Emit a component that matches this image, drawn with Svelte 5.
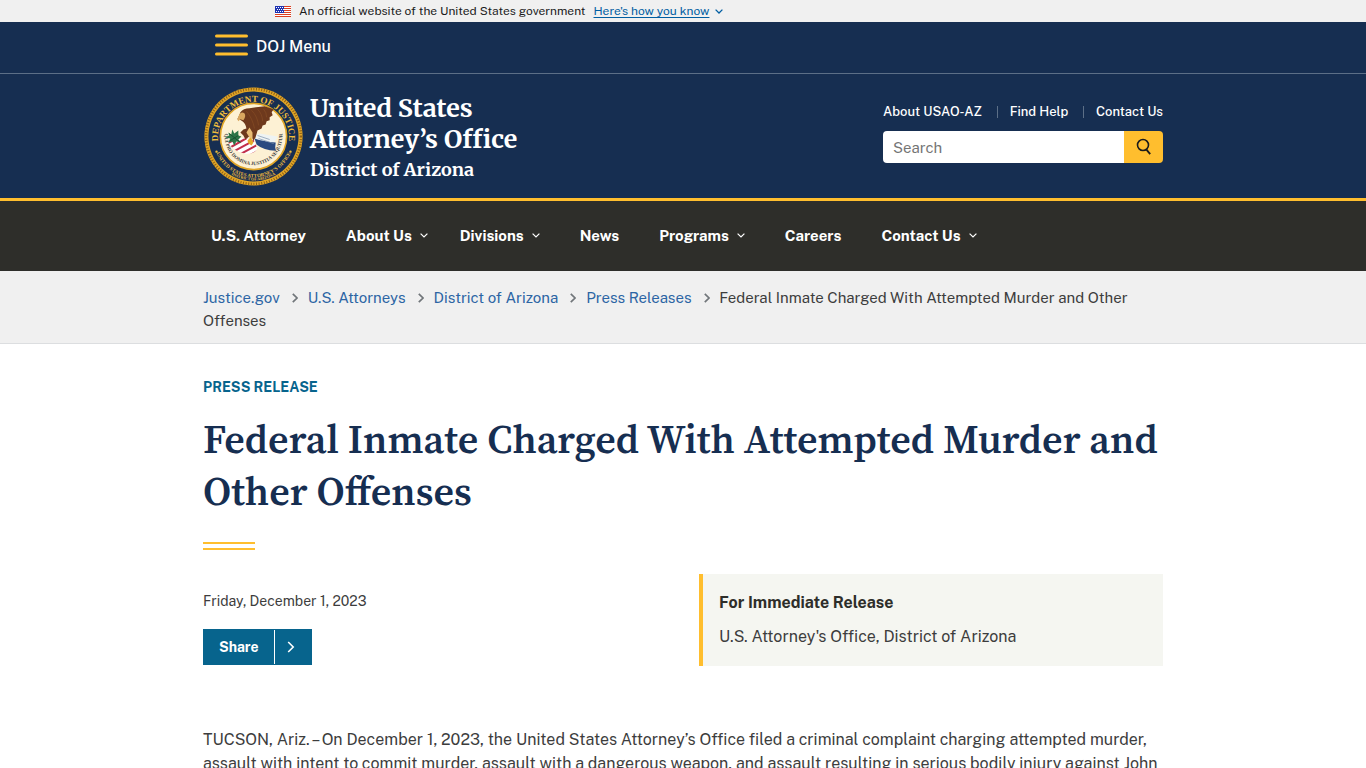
<script lang="ts">
	const topLinks = ['About USAO-AZ', 'Find Help', 'Contact Us'];

	const navItems = [
		{ label: 'U.S. Attorney', menu: false },
		{ label: 'About Us', menu: true },
		{ label: 'Divisions', menu: true },
		{ label: 'News', menu: false },
		{ label: 'Programs', menu: true },
		{ label: 'Careers', menu: false },
		{ label: 'Contact Us', menu: true }
	];

	const crumbs = ['Justice.gov', 'U.S. Attorneys', 'District of Arizona', 'Press Releases'];
	const title = 'Federal Inmate Charged With Attempted Murder and Other Offenses';

	let query = $state('');
</script>

<div class="banner">
	<div class="wrap banner-inner">
		<svg class="flag" viewBox="0 0 16 11" aria-hidden="true">
			<rect width="16" height="11" fill="#fff" />
			<path
				d="M0 .5h16M0 2.5h16M0 4.5h16M0 6.5h16M0 8.5h16M0 10.5h16"
				stroke="#db3e1f"
				stroke-width="1"
			/>
			<rect width="9" height="7" fill="#1e33b1" />
			<path
				d="M1 1.5h8M2 3.5h7M1 5.5h8"
				stroke="#fff"
				stroke-width="1"
				stroke-dasharray="1 1"
			/>
		</svg>
		<span>An official website of the United States government</span>
		<button class="know" type="button">
			<span>Here's how you know</span>
			<svg viewBox="0 0 8 5" width="8" height="5" aria-hidden="true">
				<path d="M.6.6 4 4 7.4.6" fill="none" stroke="currentColor" stroke-width="1.3" />
			</svg>
		</button>
	</div>
</div>

<header>
	<div class="menu-bar">
		<div class="wrap">
			<button class="menu" type="button">
				<svg viewBox="0 0 33 22" width="33" height="22" aria-hidden="true">
					<path
						d="M1.5 2h30M1.5 11h30M1.5 20h30"
						stroke="#ffbe2e"
						stroke-width="3"
						stroke-linecap="round"
					/>
				</svg>
				<span>DOJ Menu</span>
			</button>
		</div>
	</div>

	<div class="wrap masthead">
		<a class="brand" href="#home">
			<svg class="seal" viewBox="0 0 100 100" role="img" aria-label="Department of Justice seal">
				<defs>
					<path id="arc-top" d="M16.6 62A35.2 35.2 0 1 1 83.4 62" />
					<path id="arc-motto" d="M22 44A28.6 28.6 0 1 0 78 44" />
					<path id="arc-office" d="M11 60A40.2 40.2 0 0 0 89 60" />
					<path id="arc-district" d="M20 81.6A43.6 43.6 0 0 0 80 81.6" />
					<clipPath id="shield">
						<path d="M25 56 34 51 50 53 54 62Q50 68 42 67Q30 65 25 56Z" />
					</clipPath>
				</defs>
				<circle cx="50" cy="50" r="48.6" fill="#e0a526" />
				<circle
					cx="50"
					cy="50"
					r="47"
					fill="none"
					stroke="#8f6016"
					stroke-width="2.6"
					stroke-dasharray="1 1.6"
				/>
				<circle cx="50" cy="50" r="44.6" fill="#162e51" />
				<circle cx="50" cy="50" r="32.8" fill="#fdf1d4" stroke="#e0a526" stroke-width="1.6" />
				<text class="ring"><textPath href="#arc-top" startOffset="50%">DEPARTMENT OF JUSTICE</textPath></text>
				<text class="office"><textPath href="#arc-office" startOffset="50%">UNITED STATES ATTORNEY’S OFFICE</textPath></text>
				<text class="district"><textPath href="#arc-district" startOffset="50%">DISTRICT OF ARIZONA</textPath></text>
				<text class="motto"><textPath href="#arc-motto" startOffset="50%">QUI PRO DOMINA JUSTITIA SEQUITUR</textPath></text>
				<circle cx="13.4" cy="65" r="1.2" fill="#f0bd3c" />
				<circle cx="86.6" cy="65" r="1.2" fill="#f0bd3c" />
				<g clip-path="url(#shield)">
					<rect x="20" y="50" width="40" height="20" fill="#fff" />
					<path
						d="M22 58 37 50M25 62 46 50M30 65 54 52M36 68 58 56M44 70 58 62"
						stroke="#c22f4b"
						stroke-width="2"
					/>
				</g>
				<path d="M49 50 56 47 74 50 71 55 73 59 64 58 54 56Z" fill="#eef3f3" />
				<path d="M51 52Q60 55 72 56Q71 61 72 64Q60 64 53 58Z" fill="#2a4a80" />
				<path d="M54 49 66 53M55 52 70 57" stroke="#7f93ad" stroke-width=".7" />
				<path
					d="M25 46 28 48 29 43 31 47 35 44 35 49 38 50 35 53 38 56 33 55 31 59 29 55 25 56 27 52 22 51 26 49Z"
					fill="#2c7547"
				/>
				<path d="M26 47 37 56M27 54 35 49" stroke="#17492e" stroke-width=".8" />
				<path
					d="M34 33Q36 29 37 26Q40 22 46 22L61 20 70 23 68 26 69 29 66 31 66 34 63 35 62 38 59 39 58 42 54 44 52 51 50 54 47 49 42 53 40 49 37 46 40 43 43 42Q42 37 39 35L36 33Z"
					fill="#6e391d"
				/>
				<path
					d="M43 25Q49 32 51 42M48 24Q54 30 55 39M54 23Q59 28 59 35M60 23Q63 26 63 31"
					fill="none"
					stroke="#824a24"
					stroke-width=".8"
				/>
				<path d="M34 33 36 28Q38 25 41 27Q43 30 40 34L37 33 35 35Z" fill="#d9a760" />
				<path d="M46 41 49 46 49 56 46 51 43 46Z" fill="#e8bd75" />
				<path d="M44 54 47 51 50 56 48 59 45 57Z" fill="#e6aa2a" />
			</svg>
			<span class="brand-text">
				<span class="office-name">United States<br />Attorney’s Office</span>
				<span class="district-name">District of Arizona</span>
			</span>
		</a>

		<div class="tools">
			<ul class="top-links">
				{#each topLinks as link}
					<li><a href="#top">{link}</a></li>
				{/each}
			</ul>
			<form class="search" role="search" onsubmit={(e) => e.preventDefault()}>
				<input type="search" placeholder="Search" aria-label="Search" bind:value={query} />
				<button type="submit" aria-label="Submit search">
					<svg viewBox="0 0 16 18" width="16" height="18" aria-hidden="true">
						<circle cx="7" cy="7" r="5.5" fill="none" stroke="#1b1b1b" stroke-width="1.6" />
						<path d="m10.2 11.4 4 4.8" stroke="#1b1b1b" stroke-width="1.8" />
					</svg>
				</button>
			</form>
		</div>
	</div>
</header>

<nav class="main-nav" aria-label="Main">
	<ul class="wrap">
		{#each navItems as item}
			<li>
				{#if item.menu}
					<button type="button">
						{item.label}
						<svg viewBox="0 0 8 5" width="8" height="5" aria-hidden="true">
							<path d="M.6.6 4 4 7.4.6" fill="none" stroke="currentColor" stroke-width="1.2" />
						</svg>
					</button>
				{:else}
					<a href="#nav">{item.label}</a>
				{/if}
			</li>
		{/each}
	</ul>
</nav>

<nav class="breadcrumb" aria-label="Breadcrumbs">
	<ol class="wrap">
		{#each crumbs as crumb}
			<li class="crumb">
				<a href="#crumb">{crumb}</a>
				<svg viewBox="0 0 6 10" width="6" height="10" aria-hidden="true">
					<path d="m.8.8 4.2 4.2-4.2 4.2" fill="none" stroke="#71767a" stroke-width="1.7" />
				</svg>
			</li>
		{/each}
		<li aria-current="page">{title}</li>
	</ol>
</nav>

<main class="wrap">
	<p class="kicker">PRESS RELEASE</p>
	<h1>{title}</h1>
	<div class="rule"></div>

	<div class="meta">
		<div>
			<time datetime="2023-12-01">Friday, December 1, 2023</time>
			<button class="share" type="button">
				<span>Share</span>
				<svg viewBox="0 0 8 12" width="8" height="12" aria-hidden="true">
					<path d="m1.2 1 5 5-5 5" fill="none" stroke="currentColor" stroke-width="1.6" />
				</svg>
			</button>
		</div>
		<aside>
			<strong>For Immediate Release</strong>
			<span>U.S. Attorney's Office, District of Arizona</span>
		</aside>
	</div>

	<p class="body">
		TUCSON, Ariz. – On December 1, 2023, the United States Attorney’s Office filed a criminal
		complaint charging attempted murder, assault with intent to commit murder, assault with a
		dangerous weapon, and assault resulting in serious bodily injury against John
	</p>
</main>

<style>
	:global(body) {
		background: #fff;
		color: #3d3d3d;
		font-family: 'Public Sans', Roboto, sans-serif;
	}
	button {
		border: 0;
		padding: 0;
		background: none;
		color: inherit;
		font: inherit;
		cursor: pointer;
	}
	ul,
	ol {
		list-style: none;
	}
	svg {
		flex: none;
	}
	.wrap {
		box-sizing: border-box;
		max-width: 1024px;
		margin: 0 auto;
		padding: 0 32px;
	}

	.banner {
		background: #f0f0f0;
		color: #1b1b1b;
		font-size: 12px;
		line-height: 22px;
	}
	.banner-inner {
		display: flex;
		align-items: center;
		gap: 8px;
		padding-left: 104px;
	}
	.flag {
		width: 16px;
		height: 11px;
	}
	.know {
		display: flex;
		align-items: center;
		gap: 6px;
		color: #005ea2;
	}
	.know span {
		text-decoration: underline;
		text-underline-offset: 2px;
	}

	header {
		background: #162e51;
		color: #fff;
		border-bottom: 3px solid #ffbe2e;
	}
	.menu-bar {
		border-bottom: 1px solid #5c6f87;
	}
	.menu {
		display: flex;
		align-items: center;
		gap: 8px;
		height: 51px;
		margin-left: 12px;
		padding-bottom: 5px;
		font-size: 16px;
		font-weight: 500;
		line-height: 20px;
	}
	.menu span {
		padding-top: 3px;
	}
	.masthead {
		display: flex;
		justify-content: space-between;
		height: 124px;
	}
	.brand {
		display: flex;
		align-items: center;
		gap: 6px;
		color: #fff;
		text-decoration: none;
	}
	.seal {
		width: 101px;
		height: 101px;
	}
	.seal text {
		font-family: 'Liberation Serif', serif;
		font-weight: 700;
		text-anchor: middle;
		fill: #f0bd3c;
	}
	.seal .ring {
		font-size: 9px;
	}
	.seal .office {
		font-size: 5px;
	}
	.seal .district {
		font-size: 4px;
	}
	.seal .motto {
		font-size: 5px;
		fill: #3d3d3d;
	}
	.brand-text {
		display: flex;
		flex-direction: column;
		padding-top: 4px;
		font-family: Merriweather, 'Liberation Serif', serif;
		font-weight: 700;
	}
	.office-name {
		font-size: 25px;
		line-height: 31px;
	}
	.district-name {
		font-size: 18px;
		line-height: 29px;
	}
	.tools {
		width: 280px;
		padding-top: 28px;
	}
	.top-links {
		display: flex;
		justify-content: space-between;
		margin: 0 0 9px;
		padding: 0;
		font-size: 13px;
		font-weight: 500;
		line-height: 20px;
	}
	.top-links li {
		display: flex;
		align-items: center;
	}
	.top-links li + li::before {
		content: '';
		height: 12px;
		margin-right: 12px;
		border-left: 1px solid #5c6f87;
	}
	.top-links a {
		color: #fff;
		text-decoration: none;
	}
	.search {
		display: flex;
		height: 32px;
		border-radius: 4px;
		overflow: hidden;
	}
	.search input {
		flex: 1;
		min-width: 0;
		border: 0;
		padding: 0 10px;
		background: #fff;
		font: inherit;
		font-size: 15px;
	}
	.search input::placeholder {
		color: #757575;
	}
	.search button {
		display: grid;
		place-items: center;
		width: 39px;
		background: #ffbe2e;
	}

	.main-nav {
		background: #2e2e2a;
		color: #fff;
		font-size: 15px;
		font-weight: 700;
	}
	.main-nav ul {
		display: flex;
		gap: 40px;
		height: 70px;
		padding-left: 40px;
		padding-bottom: 2px;
	}
	.main-nav li {
		display: flex;
		align-items: center;
	}
	.main-nav li:has(button) + li:has(button) {
		margin-left: -8px;
	}
	.main-nav a {
		color: #fff;
		text-decoration: none;
	}
	.main-nav button {
		display: flex;
		align-items: center;
		gap: 8px;
	}

	.breadcrumb {
		padding: 15px 0 11px;
		border-bottom: 1px solid #dcdee0;
		background: #f0f0f0;
		font-size: 15px;
		line-height: 23px;
	}
	.breadcrumb li {
		display: inline;
	}
	.breadcrumb .crumb {
		display: inline-flex;
		align-items: center;
		gap: 12px;
		margin-right: 10px;
	}
	.breadcrumb .crumb:nth-last-child(2) {
		margin-right: 6px;
	}
	.breadcrumb a {
		color: #2c65a4;
		text-decoration: none;
	}

	.kicker {
		margin: 33px 0 16px;
		color: #07648d;
		font-size: 14px;
		font-weight: 700;
		line-height: 20px;
	}
	h1 {
		margin: 0;
		color: #162e51;
		font-family: 'Source Serif Pro', 'Source Serif 4', 'Source Serif', 'Liberation Serif', serif;
		font-size: 40px;
		font-weight: 600;
		line-height: 52px;
	}
	.rule {
		box-sizing: border-box;
		width: 52px;
		height: 8px;
		margin-top: 25px;
		border: solid #ffbe2e;
		border-width: 2px 0;
	}
	.meta {
		display: grid;
		grid-template-columns: 1fr 464px;
		gap: 32px;
		margin-top: 24px;
	}
	time {
		display: block;
		padding-top: 17px;
		font-size: 14px;
		line-height: 20px;
	}
	.share {
		display: flex;
		align-items: center;
		height: 36px;
		margin-top: 18px;
		padding-right: 17px;
		background: #07648d;
		color: #fff;
		font-size: 14px;
		font-weight: 700;
	}
	.share span {
		margin-right: 12px;
		padding: 0 15px 0 16px;
		border-right: 1px solid #fff;
		line-height: 34px;
	}
	aside {
		display: flex;
		flex-direction: column;
		gap: 10px;
		box-sizing: border-box;
		height: 92px;
		padding: 17px 16px;
		border-left: 4px solid #ffbe2e;
		background: #f5f6f1;
		font-size: 16px;
		line-height: 24px;
	}
	aside strong {
		color: #2e2e2a;
	}
	.body {
		margin: 62px 0 0;
		font-size: 16px;
		line-height: 24px;
	}
</style>
